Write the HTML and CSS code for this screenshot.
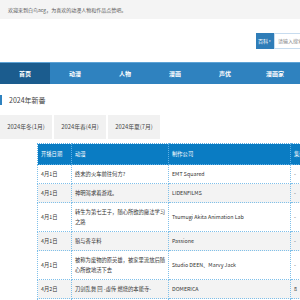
FILE: index.html
```html
<!DOCTYPE html>
<html lang="zh-CN">
<head>
    <meta charset="UTF-8">
    <meta name="viewport" content="width=device-width, initial-scale=1.0">
    <title>白鸟acg</title>
    <link rel="stylesheet" href="styles.css">
</head>
<body>
    <div class="topbar">欢迎来到白鸟acg，为喜欢的动漫人物和作品点赞吧。</div>

    <div class="header">
        <form class="search">
            <button type="button" class="search-type">百科<span class="caret">▾</span></button>
            <input type="text" class="search-input" placeholder="请输入搜索内容">
        </form>
    </div>

    <ul class="nav">
        <li class="nav-item active">首页</li>
        <li class="nav-item">动漫</li>
        <li class="nav-item">人物</li>
        <li class="nav-item">漫画</li>
        <li class="nav-item">声优</li>
        <li class="nav-item">漫画家</li>
    </ul>

    <h2 class="section-title">2024年新番</h2>

    <div class="tabs">
        <div class="tab">2024年冬(1月)</div>
        <div class="tab">2024年春(4月)</div>
        <div class="tab">2024年夏(7月)</div>
    </div>

    <table class="anime-table">
        <thead>
            <tr>
                <th class="col-date">开播日期</th>
                <th class="col-name">动漫</th>
                <th class="col-studio">制作公司</th>
                <th class="col-eps">集数</th>
            </tr>
        </thead>
        <tbody>
            <tr>
                <td>4月1日</td>
                <td>终末的火车前往何方?</td>
                <td>EMT Squared</td>
                <td>-</td>
            </tr>
            <tr>
                <td>4月1日</td>
                <td>神明渴求着游戏。</td>
                <td>LIDENFILMS</td>
                <td>-</td>
            </tr>
            <tr>
                <td>4月1日</td>
                <td>转生为第七王子，随心所欲的魔法学习之路</td>
                <td>Tsumugi Akita Animation Lab</td>
                <td>-</td>
            </tr>
            <tr>
                <td>4月1日</td>
                <td>狼与香辛料</td>
                <td>Passione</td>
                <td>-</td>
            </tr>
            <tr>
                <td>4月1日</td>
                <td>被称为废物的原英雄，被家里流放后随心所欲地活下去</td>
                <td>Studio DEEN、Marvy Jack</td>
                <td>-</td>
            </tr>
            <tr>
                <td>4月2日</td>
                <td>刀剑乱舞 回 -虚传 燃烧的本能寺-</td>
                <td>DOMERICA</td>
                <td>8</td>
            </tr>
            <tr>
                <td>4月2日</td>
                <td>怪兽8号</td>
                <td>Production I.G</td>
                <td>-</td>
            </tr>
        </tbody>
    </table>
</body>
</html>
```

FILE: styles.css
```css
html {
    overflow: hidden;
}

body {
    margin: 0;
    font-family: "Noto Sans CJK SC", "Noto Sans", sans-serif;
    color: #333;
    background: white;
}

.topbar {
    height: 19px;
    line-height: 19px;
    padding-left: 8px;
    background-color: #f4f4f4;
    font-size: 5px;
    color: #555;
}

.header {
    height: 43px;
    display: flex;
    justify-content: flex-end;
    align-items: center;
}

.search {
    display: flex;
    height: 16px;
    margin: 0;
}

.search-type {
    width: 18px;
    padding: 0 0 0 2px;
    border: none;
    background-color: #2f7db8;
    color: white;
    font-family: inherit;
    font-size: 5px;
    text-align: left;
    display: flex;
    align-items: center;
}

.caret {
    font-size: 3px;
    margin-left: 1px;
}

.search-input {
    width: 22px;
    padding: 0 0 0 3px;
    border: 1px solid #c7dcef;
    border-right: none;
    font-family: inherit;
    font-size: 5px;
    outline: none;
}

.search-input::placeholder {
    color: #888;
}

.nav {
    display: flex;
    margin: 0;
    padding: 0;
    list-style: none;
    height: 22px;
    background-color: #2f82bf;
    border-top: 1px solid #5da3d6;
    box-sizing: border-box;
}

.nav-item {
    width: 50px;
    line-height: 21px;
    text-align: center;
    color: white;
    font-size: 6px;
    font-weight: bold;
}

.nav-item.active {
    background-color: #1b5c8e;
}

.section-title {
    margin: 11px 0 0;
    height: 10px;
    line-height: 10px;
    padding-left: 7px;
    border-left: 2px solid #2f82bf;
    font-size: 7px;
    font-weight: normal;
    color: #444;
}

.tabs {
    display: flex;
    gap: 2px;
    margin-top: 10px;
}

.tab {
    width: 52px;
    height: 24px;
    line-height: 24px;
    text-align: center;
    background-color: #f1f1f1;
    font-size: 5.8px;
    color: #444;
}

.anime-table {
    margin: 4px 0 0 37px;
    border-collapse: collapse;
    font-size: 5.3px;
    table-layout: fixed;
    width: 285px;
}

.anime-table th,
.anime-table td {
    border: 1px dotted #7fc0ea;
    padding: 4px 2px 4px 3px;
    line-height: 10px;
    text-align: left;
    vertical-align: middle;
}

.anime-table th {
    background-color: #0a7cc3;
    color: white;
    font-weight: normal;
    padding: 5px 2px 5px 3px;
    border-color: #5fb0e6;
}

.anime-table tbody tr:nth-child(even) td {
    background-color: #f3f3f3;
}

.col-date {
    width: 28px;
}

.col-name {
    width: 91px;
}

.col-studio {
    width: 116px;
}

.col-eps {
    width: 30px;
}
```
